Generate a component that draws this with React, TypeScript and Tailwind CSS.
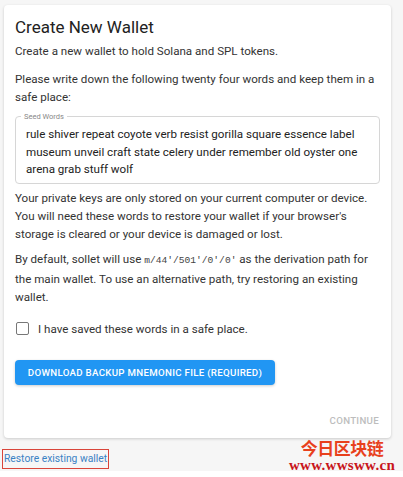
import React from 'react';

const seed =
  'rule shiver repeat coyote verb resist gorilla square essence label museum unveil craft state celery under remember old oyster one arena grab stuff wolf';

export default function App() {
  return (
    <div className="w-[403px] h-[477px] overflow-hidden bg-[#f6f6f6] font-['Roboto',sans-serif] text-[#333] relative">
      <div className="pl-[4px] pt-[5px] w-[391px]">
        <div className="bg-white rounded-[4px] shadow-[0_1px_3px_rgba(0,0,0,0.18)] px-[11px] pt-[12px] pb-[11px] h-[433px] flex flex-col">
          <h1 className="text-[17px] leading-[20px] text-[#222] font-normal">Create New Wallet</h1>
          <p className="text-[11.6px] leading-[18px] mt-[5px]">Create a new wallet to hold Solana and SPL tokens.</p>
          <p className="text-[11.6px] leading-[18px] mt-[10px]">
            Please write down the following twenty four words and keep them in a safe place:
          </p>
          <fieldset className="mt-[6px] border border-[#d6d6d6] rounded-[4px] px-[10px] pt-[5px] pb-[4px]">
            <legend className="text-[7.5px] leading-[9px] text-[#888] px-[3px] -ml-[5px]">Seed Words</legend>
            <p className="text-[11.6px] leading-[17.5px] text-[#222]">{seed}</p>
          </fieldset>
          <p className="text-[11.6px] leading-[18px] mt-[5px]">
            Your private keys are only stored on your current computer or device. You will need these words to restore
            your wallet if your browser's storage is cleared or your device is damaged or lost.
          </p>
          <p className="text-[11.6px] leading-[18px] mt-[7px]">
            By default, sollet will use{' '}
            <code className="font-['Liberation_Mono',monospace] text-[9.6px] text-[#444]">m/44'/501'/0'/0'</code> as the
            derivation path for the main wallet. To use an alternative path, try restoring an existing wallet.
          </p>
          <label className="flex items-center gap-[9px] mt-[16px] text-[11.6px] leading-[14px]">
            <span className="w-[13px] h-[13px] border-[1.5px] border-[#777] rounded-[2px] ml-[1px]" />
            I have saved these words in a safe place.
          </label>
          <div className="mt-[23px]">
            <button className="bg-[#2196f3] text-white rounded-[4px] h-[25px] w-[260px] text-[9.7px] font-medium tracking-[0.3px] shadow-[0_1px_3px_rgba(0,0,0,0.2)]">
              DOWNLOAD BACKUP MNEMONIC FILE (REQUIRED)
            </button>
          </div>
          <div className="mt-auto flex justify-end pr-[1px]">
            <span className="text-[9.7px] leading-[12px] tracking-[0.3px] text-[#bdbdbd] font-medium">CONTINUE</span>
          </div>
        </div>
      </div>
      <div className="mt-[11px] pl-[2px] flex items-start">
        <span className="border-[1.5px] border-[#d9453a] px-[1px] text-[10.3px] leading-[18px] text-[#3b82c4]">
          Restore existing wallet
        </span>
      </div>
      <div className="absolute left-[287px] w-[110px] top-[438px] flex flex-col items-center">
        <span className="text-[#e8401c] text-[17px] leading-[19px] font-bold tracking-[-0.5px] font-['Noto_Sans_CJK_SC',sans-serif]">今日区块链</span>
        <span className="mt-[1px] text-[#c8151b] text-[15px] leading-[14px] font-bold tracking-[0.3px] font-['Liberation_Serif',serif]">www.wwsww.cn</span>
      </div>
      <div className="absolute left-0 right-0 bottom-0 h-[6px] bg-white" />
    </div>
  );
}
